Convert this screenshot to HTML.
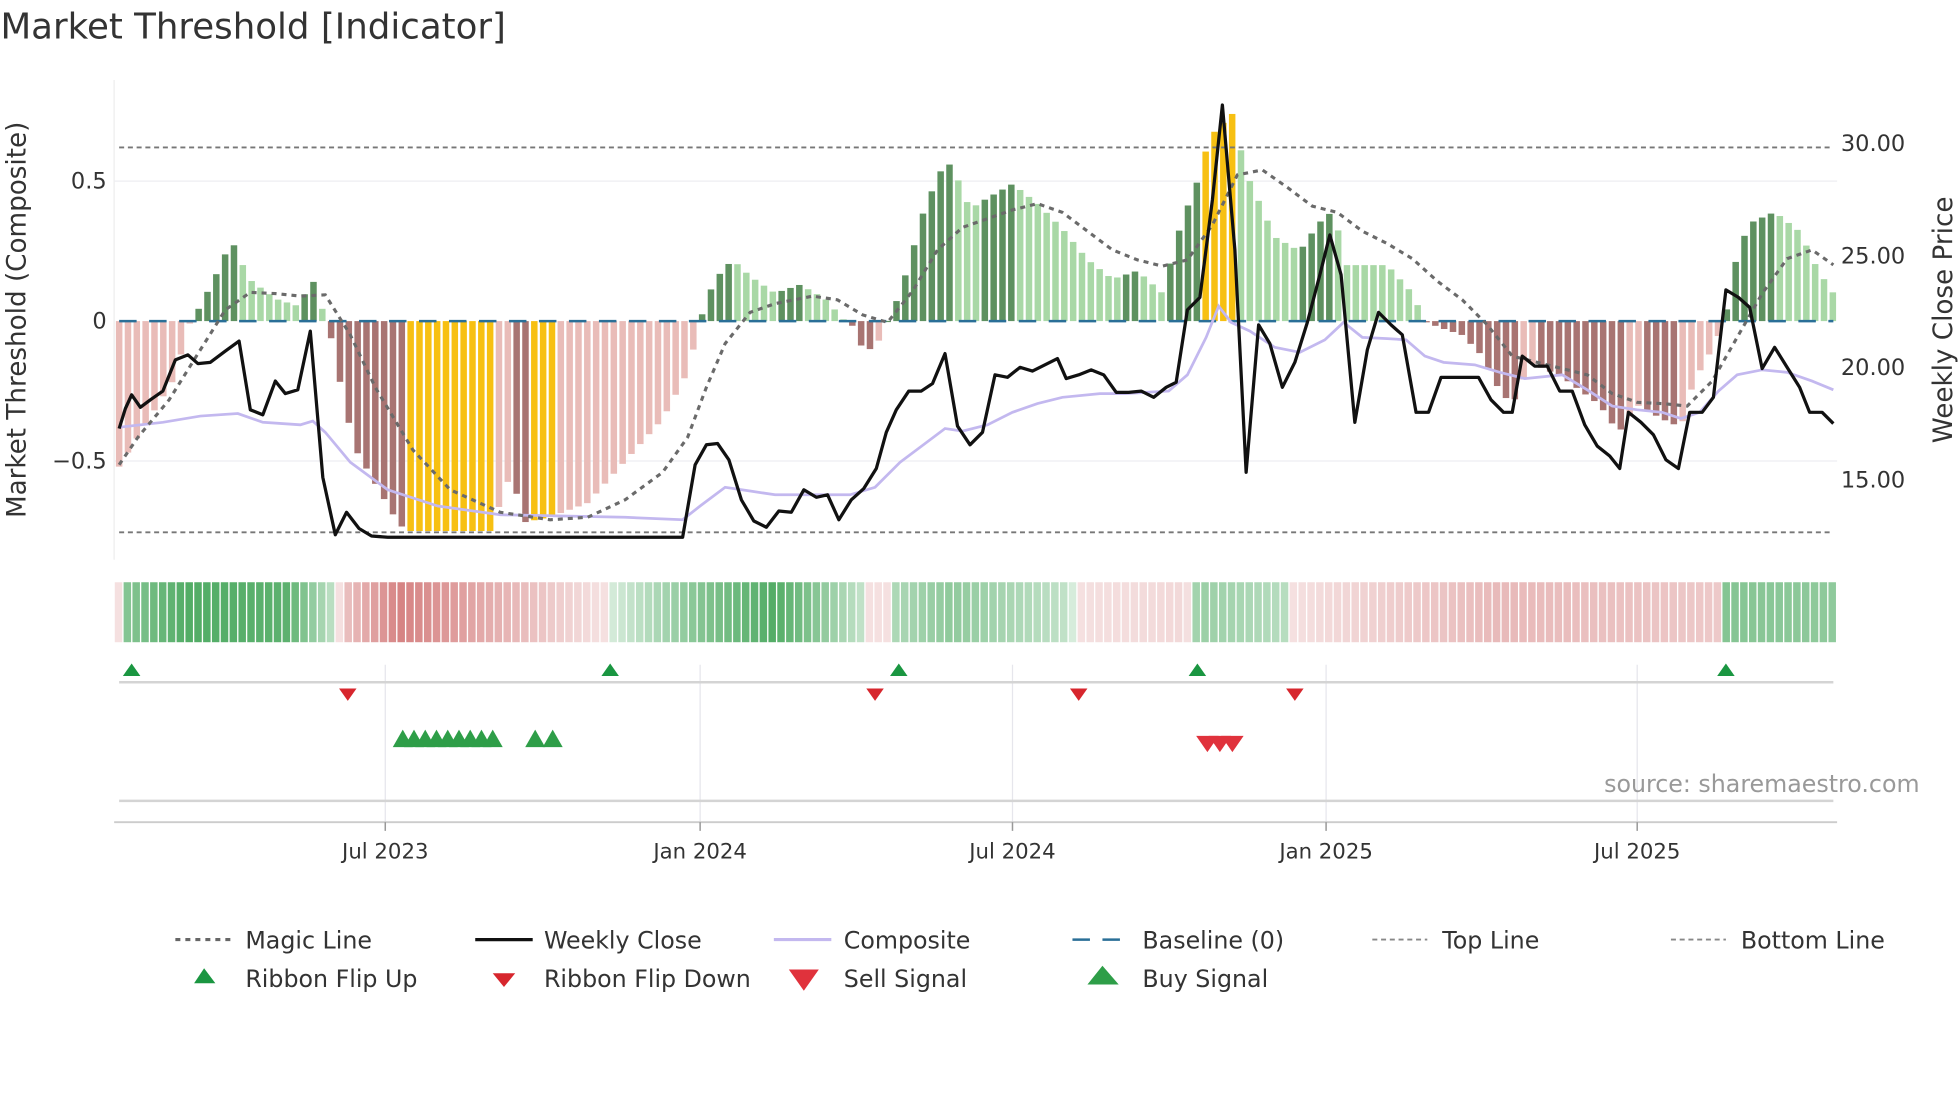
<!DOCTYPE html>
<html><head><meta charset="utf-8"><style>
html,body{margin:0;padding:0;background:#fff;}
svg{display:block;font-family:"DejaVu Sans","Liberation Sans",sans-serif;}
</style></head><body>
<svg id="s" width="1960" height="1102" viewBox="0 0 1568 882" xmlns="http://www.w3.org/2000/svg">
<rect width="1568" height="882" fill="#fff"/>
<text x="0" y="31" font-size="28.5" fill="#333">Market Threshold [Indicator]</text>
<line x1="91" y1="64" x2="91" y2="448" stroke="#eee"/>
<line x1="91" y1="145" x2="1470" y2="145" stroke="#eeeef2"/>
<line x1="91" y1="369" x2="1470" y2="369" stroke="#eeeef2"/>
<g id="bars"></g>
<line x1="95" y1="257" x2="1467" y2="257" stroke="#2a6f97" stroke-width="2" stroke-dasharray="14,10"/>
<line x1="95" y1="118" x2="1467" y2="118" stroke="#777" stroke-width="1.5" stroke-dasharray="4,3"/>
<line x1="95" y1="426" x2="1467" y2="426" stroke="#777" stroke-width="1.5" stroke-dasharray="4,3"/>
<polyline id="comp" fill="none" stroke="#c3b8ef" stroke-width="2.2"/>
<polyline id="magic" fill="none" stroke="#6a6a6a" stroke-width="2.5" stroke-dasharray="4,4"/>
<polyline id="close" fill="none" stroke="#111" stroke-width="2.6" stroke-linejoin="round"/>
<g font-size="18" fill="#333">
<text x="85" y="151" text-anchor="end">0.5</text>
<text x="85" y="263" text-anchor="end">0</text>
<text x="85" y="375" text-anchor="end">−0.5</text>
<text x="1473" y="121">30.00</text>
<text x="1473" y="211">25.00</text>
<text x="1473" y="300">20.00</text>
<text x="1473" y="390">15.00</text>
</g>
<text transform="translate(20,256) rotate(-90)" font-size="21" fill="#333" text-anchor="middle">Market Threshold (Composite)</text>
<text transform="translate(1562,256) rotate(-90)" font-size="21" fill="#333" text-anchor="middle">Weekly Close Price</text>
<g id="rib"></g>
<g stroke="#e6e6ec" stroke-width="1">
<line x1="308" y1="532" x2="308" y2="658"/><line x1="560" y1="532" x2="560" y2="658"/><line x1="810" y1="532" x2="810" y2="658"/><line x1="1061" y1="532" x2="1061" y2="658"/><line x1="1310" y1="532" x2="1310" y2="658"/>
</g>
<line x1="95" y1="546" x2="1467" y2="546" stroke="#d4d4d4" stroke-width="2"/>
<line x1="95" y1="641" x2="1467" y2="641" stroke="#d4d4d4" stroke-width="2"/>
<line x1="91" y1="658" x2="1470" y2="658" stroke="#ccc" stroke-width="1.5"/>
<g stroke="#999" stroke-width="1.2">
<line x1="308" y1="658" x2="308" y2="665"/><line x1="560" y1="658" x2="560" y2="665"/><line x1="810" y1="658" x2="810" y2="665"/><line x1="1061" y1="658" x2="1061" y2="665"/><line x1="1310" y1="658" x2="1310" y2="665"/>
</g>
<g id="mk"></g>
<g font-size="17" fill="#333" text-anchor="middle">
<text x="308" y="687">Jul 2023</text><text x="560" y="687">Jan 2024</text><text x="810" y="687">Jul 2024</text><text x="1061" y="687">Jan 2025</text><text x="1310" y="687">Jul 2025</text>
</g>
<text x="1536" y="634" font-size="19" fill="#999" text-anchor="end">source: sharemaestro.com</text>
<g font-size="19" fill="#333">
<line x1="140" y1="752" x2="184" y2="752" stroke="#666" stroke-width="2.5" stroke-dasharray="4,4"/><text x="196" y="759">Magic Line</text>
<line x1="380" y1="752" x2="426" y2="752" stroke="#111" stroke-width="2.6"/><text x="435" y="759">Weekly Close</text>
<line x1="619" y1="752" x2="665" y2="752" stroke="#c3b8ef" stroke-width="2.5"/><text x="675" y="759">Composite</text>
<line x1="858" y1="752" x2="904" y2="752" stroke="#2a6f97" stroke-width="2" stroke-dasharray="14,10"/><text x="914" y="759">Baseline (0)</text>
<line x1="1098" y1="752" x2="1142" y2="752" stroke="#888" stroke-width="1.5" stroke-dasharray="4,3"/><text x="1154" y="759">Top Line</text>
<line x1="1337" y1="752" x2="1381" y2="752" stroke="#888" stroke-width="1.5" stroke-dasharray="4,3"/><text x="1393" y="759">Bottom Line</text>
<polygon points="163,775 155,787 172,787" fill="#1a9641"/><text x="196" y="790">Ribbon Flip Up</text>
<polygon points="394,779 412,779 403,790" fill="#d7262d"/><text x="435" y="790">Ribbon Flip Down</text>
<polygon points="631,776 655,776 643,793" fill="#e0323c"/><text x="675" y="790">Sell Signal</text>
<polygon points="882,773 870,788 895,788" fill="#2e9e48"/><text x="914" y="790">Buy Signal</text>
</g>
</svg>
<script>
const NS="http://www.w3.org/2000/svg";
function el(p,t,a){const e=document.createElementNS(NS,t);for(const k in a)e.setAttribute(k,a[k]);p.appendChild(e);return e;}
function interp(A,x){if(x<=A[0][0])return A[0][1];for(let i=1;i<A.length;i++){if(x<=A[i][0]){const[a,b]=A[i-1],[c,d]=A[i];return b+(d-b)*(x-a)/(c-a);}}return A[A.length-1][1];}
const V=[[95,-.52],[140,-.2],[150,-.02],[157,.03],[171,.15],[185,.29],[199,.15],[220,.08],[241,.05],[248,.18],[255,.07],[262,0],[269,-.16],[283,-.45],[318,-.72],[325,-.75],[395,-.75],[402,-.6],[410,-.55],[418,-.72],[440,-.7],[470,-.65],[500,-.5],[530,-.35],[548,-.2],[556,-.08],[563,.05],[572,.15],[586,.22],[600,.16],[620,.1],[640,.13],[660,.08],[676,0],[683,-.02],[690,-.1],[700,-.1],[710,0],[720,.1],[730,.25],[738,.38],[746,.47],[757,.58],[767,.5],[776,.4],[790,.44],[810,.49],[830,.42],[850,.33],[870,.22],[890,.15],[910,.18],[930,.1],[945,.35],[958,.5],[968,.66],[988,.75],[995,.55],[1005,.45],[1020,.3],[1040,.25],[1055,.35],[1068,.4],[1075,.2],[1090,.2],[1110,.2],[1130,.1],[1140,0],[1150,-.02],[1170,-.05],[1185,-.12],[1200,-.25],[1210,-.3],[1225,-.15],[1250,-.2],[1280,-.3],[1295,-.4],[1310,-.3],[1330,-.35],[1345,-.38],[1355,-.22],[1370,-.1],[1380,0],[1390,.24],[1400,.35],[1420,.39],[1440,.32],[1455,.18],[1467,.1]];
const R=[[95,-.2],[102,.6],[150,.85],[230,.8],[268,.3],[276,-.4],[320,-.8],[400,-.5],[480,-.2],[488,.2],[560,.6],[620,.85],[690,.3],[697,-.2],[710,-.2],[716,.4],[760,.55],[855,.3],[862,-.2],[950,-.25],[958,.5],[1030,.35],[1035,-.2],[1100,-.3],[1200,-.45],[1300,-.4],[1375,-.35],[1381,.6],[1467,.55]];
const bars=document.getElementById('bars'),rib=document.getElementById('rib');
const step=7.07;
function mix(c,t){const w=[255,255,255];return 'rgb('+c.map((v,i)=>Math.round(w[i]+(v-w[i])*t)).join(',')+')';}
for(let x=95;x<=1468;x+=step){
 const v=interp(V,x);const p=interp(V,x-step);const y0=257,h=v*224;
 let col;
 const yel=(x>322&&x<397)||(x>426&&x<442)||(x>963&&x<992);
 if(yel)col='#f7c012';
 else if(v>=0)col=(v>p)?'#5e9160':'#a9d8a6';
 else col=(v<p)?'#a87472':'#e9bcb8';
 el(bars,'rect',{x:x-2.6,y:h>=0?y0-h:y0,width:5.2,height:Math.max(Math.abs(h),1),fill:col});
 const s=interp(R,x);const t=Math.max(.2,Math.abs(s));
 el(rib,'rect',{x:x-3.5,y:466,width:6,height:48,fill:s>=0?mix([52,158,75],t):mix([204,100,100],t)});
}
const close="95,343 100,327 105,316 112,326 120,320 130,313 140,288 150,284 158,291 168,290 180,281 191,273 200,328 210,332 220,305 228,315 238,312 248,265 258,382 268,428 277,410 287,423 297,429 310,430 330,430 420,430 546,430 556,372 565,356 574,355 583,368 593,400 603,417 613,422 623,409 633,410 643,392 653,398 662,396 671,416 681,400 691,391 701,375 709,346 717,328 727,313 737,313 746,307 756,283 766,341 776,356 786,346 796,300 806,302 816,294 826,297 836,292 846,287 853,303 863,300 873,296 883,300 893,314 903,314 913,313 923,318 933,310 941,306 950,248 960,238 970,160 978,84 988,200 997,378 1007,260 1016,275 1026,310 1036,290 1046,258 1056,220 1064,188 1073,220 1084,338 1094,280 1103,250 1113,260 1122,268 1133,330 1143,330 1153,302 1163,302 1173,302 1183,302 1193,320 1203,330 1210,330 1218,285 1228,293 1238,293 1248,313 1258,313 1268,340 1278,357 1288,365 1296,375 1303,330 1313,338 1323,348 1333,368 1343,375 1352,330 1362,330 1371,318 1381,232 1391,238 1400,246 1410,295 1420,278 1430,294 1440,310 1448,330 1458,330 1467,339";
const comp="95,342 130,338 160,333 190,331 210,338 240,340 250,337 260,346 280,370 310,392 350,405 400,412 450,413 500,414 546,416 560,405 580,390 600,393 620,396 640,396 680,396 700,390 720,370 740,355 756,343 770,345 790,340 810,330 830,323 850,318 880,315 900,315 935,313 950,300 965,270 975,245 985,258 1000,265 1020,278 1040,282 1060,272 1075,258 1090,270 1110,271 1125,272 1140,285 1155,290 1180,292 1200,298 1220,303 1250,300 1270,312 1290,325 1310,328 1330,330 1345,335 1360,330 1375,313 1390,300 1410,296 1430,298 1450,305 1467,312";
const magic="95,372 110,350 135,320 160,280 180,248 200,234 220,235 240,237 260,236 280,268 300,310 330,360 360,392 400,410 440,416 470,414 500,400 530,378 550,350 565,310 580,275 600,250 620,243 650,237 670,240 690,252 710,258 730,233 750,200 770,182 790,175 810,168 830,163 850,170 870,185 890,200 910,208 930,213 950,208 970,180 990,140 1010,136 1030,150 1050,165 1070,170 1090,185 1110,195 1130,207 1150,225 1170,240 1190,260 1210,285 1230,290 1250,295 1270,300 1290,315 1310,322 1330,323 1350,325 1370,305 1390,270 1410,235 1430,207 1450,200 1467,212";
document.getElementById('close').setAttribute('points',close);
document.getElementById('comp').setAttribute('points',comp);
document.getElementById('magic').setAttribute('points',magic);
const mk=document.getElementById('mk');
[105,488,719,958,1381].forEach(x=>el(mk,'polygon',{points:`${x},531 ${x-7},541 ${x+7},541`,fill:'#1a9641'}));
[278,700,863,1036].forEach(x=>el(mk,'polygon',{points:`${x-7},551 ${x+7},551 ${x},561`,fill:'#d7262d'}));
[322,331,340,349,358,367,376,385,394,428,442].forEach(x=>el(mk,'polygon',{points:`${x},584 ${x-8},598 ${x+8},598`,fill:'#2e9e48'}));
[966,976,986].forEach(x=>el(mk,'polygon',{points:`${x-9},589 ${x+9},589 ${x},602`,fill:'#e0323c'}));
</script>
</body></html>
